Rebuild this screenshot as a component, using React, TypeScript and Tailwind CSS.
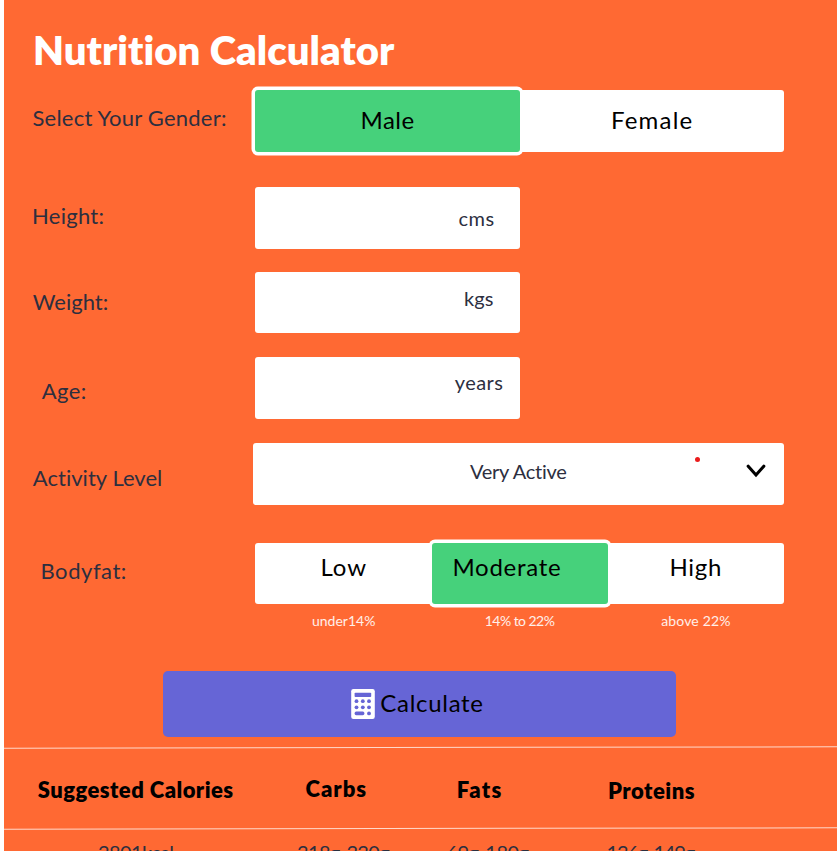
import type { ReactNode } from "react";

const INK = "text-[#2d2f3f]";

function Label({ children, className = "" }: { children: ReactNode; className?: string }) {
  return <div className={`shrink-0 text-[22px] leading-[24px] ${INK} ${className}`}>{children}</div>;
}

function UnitField({ unit, className }: { unit: string; className: string }) {
  return (
    <div className={`w-[265px] rounded-[3px] bg-white text-[20px] leading-[24px] ${INK} ${className}`}>
      {unit}
    </div>
  );
}

function Segment({ children, selected = false, className }: { children: ReactNode; selected?: boolean; className: string }) {
  return (
    <button
      type="button"
      className={`flex items-start text-left text-[24px] leading-[24px] text-black ${
        selected ? "z-10 rounded-[3px] bg-[#46d17b] ring-[3.5px] ring-white" : "bg-white"
      } ${className}`}
    >
      {children}
    </button>
  );
}

function CalculatorIcon() {
  return (
    <svg width="24" height="30" viewBox="0 0 24 30" className="mt-[18px] shrink-0">
      <rect x="0.2" width="23.6" height="30" rx="2.2" fill="#fff" />
      <g fill="#6665d6">
        <rect x="3.6" y="3.8" width="16.6" height="4.2" rx="0.8" />
        <circle cx="5.5" cy="12.2" r="1.9" />
        <circle cx="11.8" cy="12.2" r="1.9" />
        <circle cx="18" cy="12.2" r="1.9" />
        <circle cx="5.5" cy="18.3" r="1.9" />
        <circle cx="11.8" cy="18.3" r="1.9" />
        <circle cx="18" cy="18.3" r="1.9" />
        <rect x="3.6" y="22.6" width="9.8" height="3.6" rx="1.6" />
        <circle cx="18" cy="24.4" r="1.9" />
      </g>
    </svg>
  );
}

export default function App() {
  return (
    <div className="h-[851px] w-full overflow-hidden bg-white pl-1 font-['Lato',sans-serif]">
      <main className="flex h-full flex-col overflow-hidden bg-[#ff6933]">
        <h1 className="h-[90px] shrink-0 pt-[26px] pl-[29px] text-[40px] leading-[48px] font-extrabold tracking-[0.06px] text-white">
          Nutrition Calculator
        </h1>

        <div className="flex h-[62px] shrink-0">
          <Label className="w-[251px] pt-[16px] pl-[28.5px] tracking-[0.22px]">Select Your Gender:</Label>
          <div className="flex w-[529px]">
            <Segment selected className="w-[265px] pt-[18px] pl-[105.5px] tracking-[0.5px]">Male</Segment>
            <Segment className="w-[264px] rounded-r-[3px] pt-[18px] pl-[91px] tracking-[1.2px]">Female</Segment>
          </div>
        </div>

        <div className="mt-[35px] flex h-[62px] shrink-0">
          <Label className="w-[251px] pt-[17px] pl-[28px] tracking-[0.28px]">Height:</Label>
          <UnitField unit="cms" className="pt-[19px] pl-[203.5px] tracking-[0.5px]" />
        </div>

        <div className="mt-[23px] flex h-[61px] shrink-0">
          <Label className="w-[251px] pt-[18px] pl-[28.8px]">Weight:</Label>
          <UnitField unit="kgs" className="pt-[14px] pl-[209px] tracking-[0.1px]" />
        </div>

        <div className="mt-[24px] flex h-[62px] shrink-0">
          <Label className="w-[251px] pt-[22px] pl-[37.7px] tracking-[0.4px]">Age:</Label>
          <UnitField unit="years" className="pt-[13px] pl-[199.8px] tracking-[0.4px]" />
        </div>

        <div className="mt-[24px] flex h-[62px] shrink-0">
          <Label className="w-[249px] pt-[23px] pl-[28.8px] tracking-[0.04px]">Activity Level</Label>
          <div className={`flex w-[531px] rounded-[3px] bg-white text-[20px] leading-[24px] ${INK}`}>
            <span className="w-[442px] pt-[16px] pl-[217px] tracking-[-0.28px]">Very Active</span>
            <span className="mt-[13.5px] size-[5px] rounded-full bg-[#ea1c1c]" />
            <svg width="20" height="15" viewBox="0 0 20 15" className="mt-[20px] ml-[46px] shrink-0" fill="none">
              <path d="M2.2 3.2 10 12 17.8 3.2" stroke="#000" strokeWidth="3.1" strokeLinejoin="miter" strokeLinecap="round" />
            </svg>
          </div>
        </div>

        <div className="mt-[38px] flex h-[61px] shrink-0">
          <Label className="w-[251px] pt-[16px] pl-[36.5px] tracking-[0.55px]">Bodyfat:</Label>
          <div className="flex w-[529px]">
            <Segment className="w-[177px] rounded-l-[3px] pt-[12px] pl-[65.5px] tracking-[0.9px]">Low</Segment>
            <Segment selected className="w-[176px] pt-[12px] pl-[20.5px] tracking-[0.7px]">Moderate</Segment>
            <Segment className="w-[176px] rounded-r-[3px] pt-[12px] pl-[61.5px] tracking-[0.7px]">High</Segment>
          </div>
        </div>

        <div className="flex h-[67px] shrink-0 pt-[5px] pl-[251px] text-[14px] leading-[24px] text-white/90">
          <span className="w-[177px] pl-[57px]">under14%</span>
          <span className="w-[176px] pl-[52.8px] tracking-[-0.55px]">14% to 22%</span>
          <span className="w-[176px] pl-[53.2px] tracking-[0.15px]">above 22%</span>
        </div>

        <button
          type="button"
          className="ml-[158.5px] flex h-[66px] w-[513px] shrink-0 items-start rounded-[5px] bg-[#6665d6] pl-[188px] text-left text-[24px] leading-[24px] text-black"
        >
          <CalculatorIcon />
          <span className="pt-[20px] pl-[5.8px] tracking-[0.7px]">Calculate</span>
        </button>

        <div className="mt-[10px] h-px shrink-0 rotate-[-0.09deg] bg-white/75" />
        <div className="flex h-[80px] shrink-0 text-[22px] leading-[24px] font-extrabold text-black">
          <span className="w-[264px] pt-[30px] pl-[33.8px] tracking-[0.45px]">Suggested Calories</span>
          <span className="w-[150px] pt-[29px] pl-[37.5px] tracking-[1px]">Carbs</span>
          <span className="w-[150px] pt-[30px] pl-[38.8px] tracking-[1.3px]">Fats</span>
          <span className="pt-[31px] pl-[40px] tracking-[0.5px]">Proteins</span>
        </div>
        <div className="h-px shrink-0 rotate-[-0.09deg] bg-white/75" />
        <div className={`flex h-[40px] shrink-0 pt-[11px] text-[20px] leading-[24px] ${INK}`}>
          <span className="w-[264px] pl-[94px] tracking-[-0.6px]">2801kcal</span>
          <span className="w-[150px] pl-[29px] tracking-[-0.65px]">318g-330g</span>
          <span className="w-[150px] pl-[28.5px] tracking-[-0.55px]">69g-180g</span>
          <span className="pl-[38.5px] tracking-[-1.15px]">136g-149g</span>
        </div>
      </main>
    </div>
  );
}
